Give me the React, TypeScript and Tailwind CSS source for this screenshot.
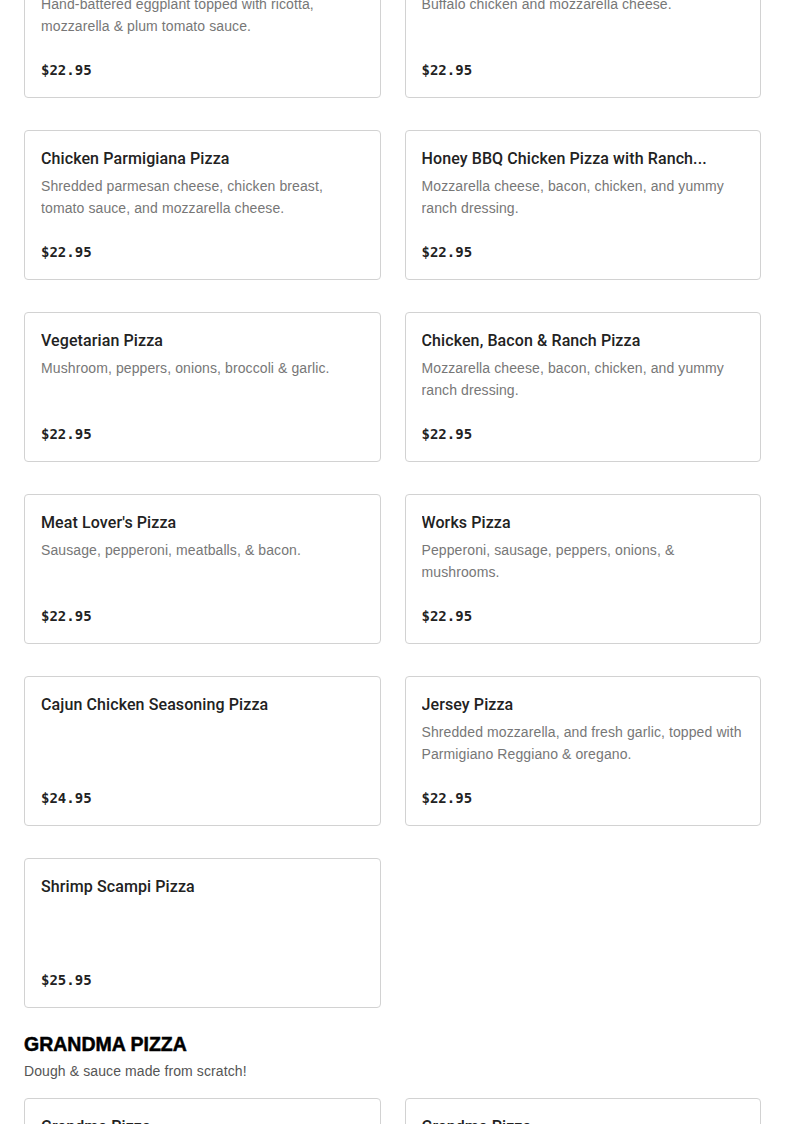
import React from 'react';

type Item = { name: string; desc?: string; price: string };

const pizzas: Item[] = [
  { name: 'Eggplant Parmigiana Pizza', desc: 'Hand-battered eggplant topped with ricotta, mozzarella & plum tomato sauce.', price: '$22.95' },
  { name: 'Buffalo Chicken Pizza', desc: 'Buffalo chicken and mozzarella cheese.', price: '$22.95' },
  { name: 'Chicken Parmigiana Pizza', desc: 'Shredded parmesan cheese, chicken breast, tomato sauce, and mozzarella cheese.', price: '$22.95' },
  { name: 'Honey BBQ Chicken Pizza with Ranch...', desc: 'Mozzarella cheese, bacon, chicken, and yummy ranch dressing.', price: '$22.95' },
  { name: 'Vegetarian Pizza', desc: 'Mushroom, peppers, onions, broccoli & garlic.', price: '$22.95' },
  { name: 'Chicken, Bacon & Ranch Pizza', desc: 'Mozzarella cheese, bacon, chicken, and yummy ranch dressing.', price: '$22.95' },
  { name: "Meat Lover's Pizza", desc: 'Sausage, pepperoni, meatballs, & bacon.', price: '$22.95' },
  { name: 'Works Pizza', desc: 'Pepperoni, sausage, peppers, onions, & mushrooms.', price: '$22.95' },
  { name: 'Cajun Chicken Seasoning Pizza', price: '$24.95' },
  { name: 'Jersey Pizza', desc: 'Shredded mozzarella, and fresh garlic, topped with Parmigiano Reggiano & oregano.', price: '$22.95' },
  { name: 'Shrimp Scampi Pizza', price: '$25.95' },
];

const grandma: Item[] = [
  { name: 'Grandma Pizza', desc: 'Fresh mozzarella, plum tomato sauce & basil.', price: '$24.95' },
  { name: 'Grandma Pizza', desc: 'Fresh mozzarella & vodka sauce.', price: '$25.95' },
];

function Card({ item }: { item: Item }) {
  return (
    <div className="h-[150px] flex flex-col border border-[#d2d2d2] rounded-[4px] bg-white px-4 pt-4 pb-[17px]">
      <h3 className="text-[16px] leading-6 font-medium tracking-[0.1px] text-[#222] truncate font-['Roboto',sans-serif]">{item.name}</h3>
      {item.desc && (
        <p className="mt-1 text-[14px] leading-[22px] tracking-[0.1px] text-[#777] line-clamp-2">{item.desc}</p>
      )}
      <div className="mt-auto text-[14px] leading-5 font-bold text-[#222] font-['DejaVu_Sans_Mono',monospace]">
        {item.price}
      </div>
    </div>
  );
}

export default function App() {
  return (
    <div className="bg-white h-[1124px] overflow-hidden font-['Liberation_Sans',Arial,sans-serif]">
      <div className="px-6 -mt-[52px]">
        <div className="grid grid-cols-2 gap-x-6 gap-y-8">
          {pizzas.map((p) => (
            <Card key={p.name} item={p} />
          ))}
        </div>
        <div className="mt-6">
          <h2 className="text-[19.5px] leading-6 font-bold text-black uppercase [-webkit-text-stroke:0.5px_black]">Grandma Pizza</h2>
          <p className="mt-1 text-[14px] leading-[22px] tracking-[0.1px] text-[#555]">Dough &amp; sauce made from scratch!</p>
        </div>
        <div className="mt-4 grid grid-cols-2 gap-x-6 gap-y-8">
          {grandma.map((p, i) => (
            <Card key={i} item={p} />
          ))}
        </div>
      </div>
    </div>
  );
}
